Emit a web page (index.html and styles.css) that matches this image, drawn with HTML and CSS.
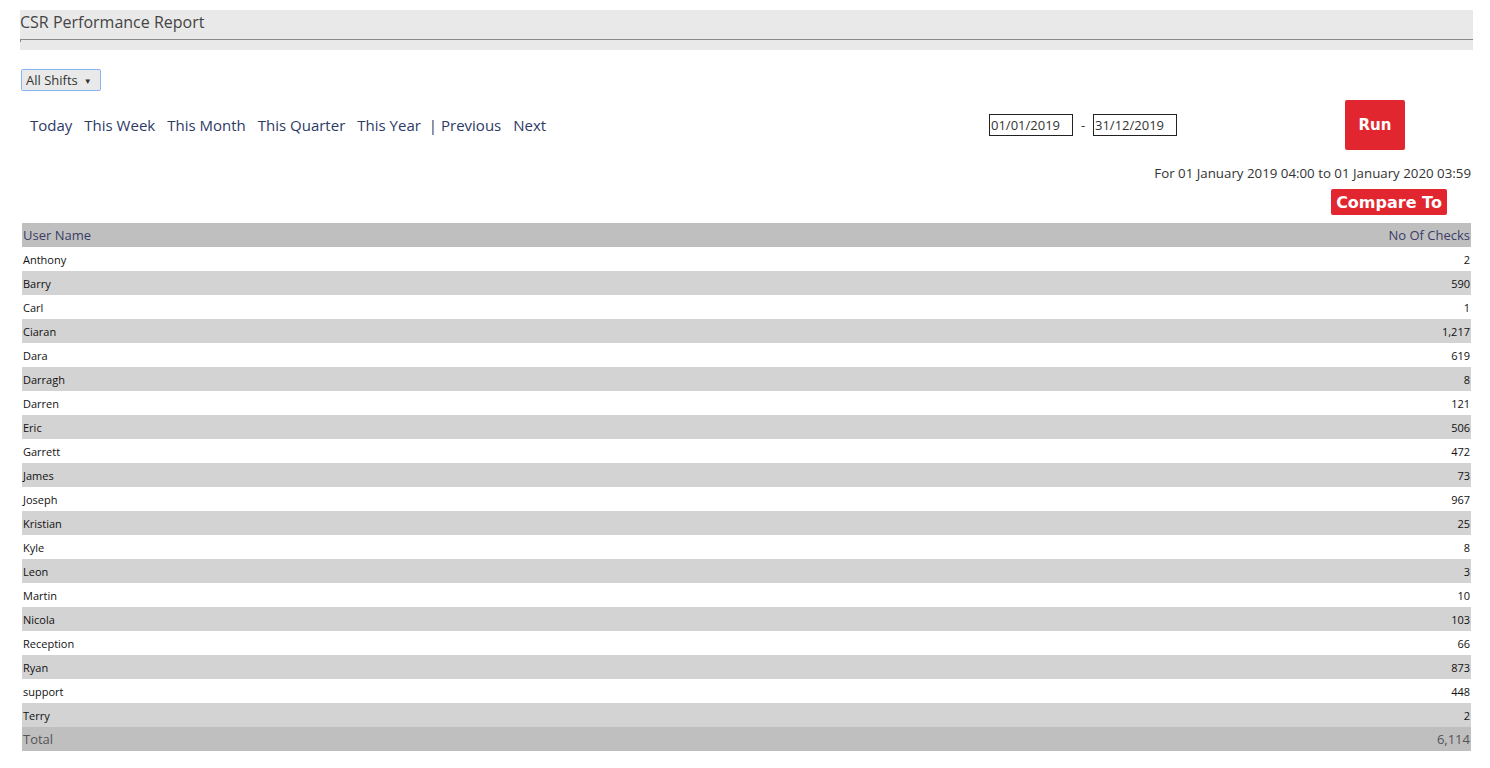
FILE: index.html
```html
<!DOCTYPE html>
<html>
<head>
<meta charset="utf-8">
<link rel="stylesheet" href="styles.css">
</head>
<body>
<div class="page">
  <div class="header">
    <div class="title">CSR Performance Report</div>
    <hr class="rule">
  </div>

  <div class="shift-row">
    <div class="select">All Shifts <span class="caret">&#9660;</span></div>
  </div>

  <div class="controls">
    <nav class="periods">
      <a>Today</a><a>This Week</a><a>This Month</a><a>This Quarter</a><a>This Year</a><a class="prev">| Previous</a><a>Next</a>
    </nav>
    <div class="dates">
      <div class="date-input">01/01/2019</div>
      <span class="dash">-</span>
      <div class="date-input">31/12/2019</div>
    </div>
    <button class="run">Run</button>
  </div>

  <div class="range">For 01 January 2019 04:00 to 01 January 2020 03:59</div>
  <div class="compare-row"><button class="compare">Compare To</button></div>

  <table class="report">
    <thead>
      <tr><th class="name">User Name</th><th class="num">No Of Checks</th></tr>
    </thead>
    <tbody>
      <tr><td>Anthony</td><td class="num">2</td></tr>
      <tr><td>Barry</td><td class="num">590</td></tr>
      <tr><td>Carl</td><td class="num">1</td></tr>
      <tr><td>Ciaran</td><td class="num">1,217</td></tr>
      <tr><td>Dara</td><td class="num">619</td></tr>
      <tr><td>Darragh</td><td class="num">8</td></tr>
      <tr><td>Darren</td><td class="num">121</td></tr>
      <tr><td>Eric</td><td class="num">506</td></tr>
      <tr><td>Garrett</td><td class="num">472</td></tr>
      <tr><td>James</td><td class="num">73</td></tr>
      <tr><td>Joseph</td><td class="num">967</td></tr>
      <tr><td>Kristian</td><td class="num">25</td></tr>
      <tr><td>Kyle</td><td class="num">8</td></tr>
      <tr><td>Leon</td><td class="num">3</td></tr>
      <tr><td>Martin</td><td class="num">10</td></tr>
      <tr><td>Nicola</td><td class="num">103</td></tr>
      <tr><td>Reception</td><td class="num">66</td></tr>
      <tr><td>Ryan</td><td class="num">873</td></tr>
      <tr><td>support</td><td class="num">448</td></tr>
      <tr><td>Terry</td><td class="num">2</td></tr>
    </tbody>
    <tfoot>
      <tr><td>Total</td><td class="num">6,114</td></tr>
    </tfoot>
  </table>
</div>
</body>
</html>
```

FILE: styles.css
```css
html, body {
  margin: 0;
  padding: 0;
  background: #fff;
}
body {
  font-family: "Open Sans", "Noto Sans", sans-serif;
  color: #333;
}
.page {
  padding: 10px 17px 0 20px;
}
.header {
  background: #e9e9e9;
  height: 40px;
  display: flex;
  flex-direction: column;
}
.title {
  font-size: 16px;
  color: #444;
  line-height: 24px;
  height: 29px;
}
.rule {
  margin: 0;
  border: 0;
  border-top: 1px solid #8a8a8a;
  border-left: 1px solid #8a8a8a;
  height: 2px;
}
.shift-row {
  padding-top: 18px;
  padding-left: 1px;
}
.select {
  display: inline-flex;
  align-items: center;
  box-sizing: border-box;
  width: 80px;
  height: 22px;
  border: 1px solid #8ab4f0;
  border-radius: 2px;
  background: #e9e9e9;
  font-size: 13px;
  color: #333;
  padding-left: 4px;
  gap: 6px;
}
.caret {
  font-size: 8px;
  color: #333;
}
.controls {
  display: flex;
  align-items: center;
  height: 50px;
  margin-top: 9px;
}
.periods {
  display: flex;
  gap: 12px;
  padding-left: 10px;
  font-size: 15px;
  color: #2e3a66;
  width: 959px;
}
.periods a {
  color: #2e3a66;
}
.periods .prev {
  margin-left: -4px;
}
.dates {
  display: flex;
  align-items: center;
}
.date-input {
  box-sizing: border-box;
  width: 84px;
  height: 22px;
  border: 1px solid #222;
  font-size: 13px;
  color: #333;
  padding-left: 1px;
  line-height: 20px;
}
.dash {
  width: 20px;
  text-align: center;
  font-size: 13px;
}
.run {
  margin-left: 168px;
  width: 60px;
  height: 50px;
  background: #e2262f;
  color: #fff;
  border: 0;
  border-radius: 2px;
  font-family: "DejaVu Sans", sans-serif;
  font-weight: bold;
  font-size: 15px;
  padding: 0;
}
.range {
  text-align: right;
  font-size: 13.3px;
  color: #333;
  margin-top: 13px;
  padding-right: 2px;
  line-height: 20px;
}
.compare-row {
  display: flex;
  justify-content: flex-end;
  padding-right: 26px;
  margin-top: 6px;
}
.compare {
  height: 26px;
  width: 116px;
  background: #e2262f;
  color: #fff;
  border: 0;
  border-radius: 2px;
  font-family: "DejaVu Sans", sans-serif;
  font-weight: bold;
  font-size: 16px;
  padding: 0;
}
.report {
  margin-top: 8px;
  margin-left: 2px;
  width: 1449px;
  border-collapse: collapse;
}
.report th, .report td {
  height: 24px;
  padding: 0 1px;
  text-align: left;
}
.report .num {
  text-align: right;
}
.report thead th {
  background: #bfbfbf;
  font-weight: normal;
  font-size: 13px;
  color: #3a3d66;
}
.report tbody td {
  font-size: 11px;
  color: #111;
}
.report tbody tr:nth-child(even) td {
  background: #d3d3d3;
}
.report tfoot td {
  background: #bfbfbf;
  font-size: 13px;
  color: #555;
}
```
